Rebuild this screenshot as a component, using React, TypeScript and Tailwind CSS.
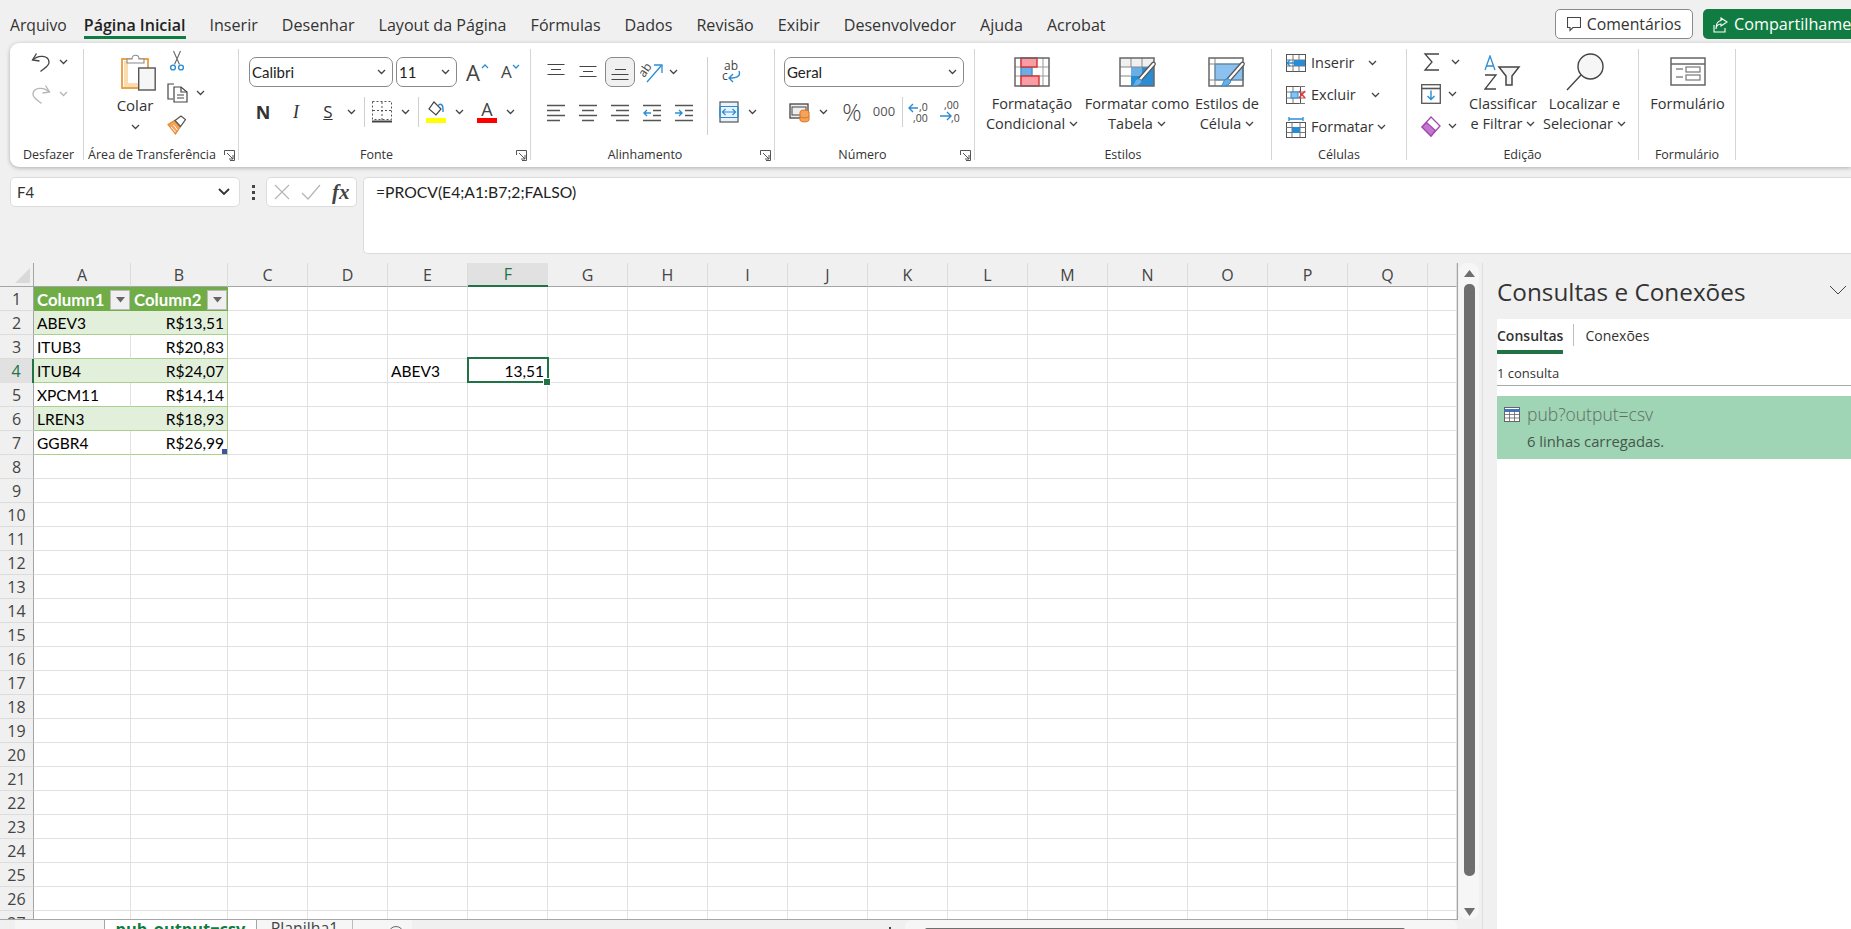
import React from "react";

const UI = "font-['Open_Sans','Noto_Sans',sans-serif]";
const CAL = "font-['Lato','Liberation_Sans',sans-serif]";

const Chev = ({ gray = false }: { gray?: boolean }) => (
  <svg width="9" height="6" viewBox="0 0 9 6" className="shrink-0">
    <path d="M1 1l3.5 3.5L8 1" fill="none" stroke={gray ? "#b5b5b5" : "#444"} strokeWidth="1.3" />
  </svg>
);

const Launcher = () => (
  <svg width="11" height="11" viewBox="0 0 11 11">
    <path d="M.5 5V.5H10.5V10.500H6M3 3l6 6M9 5v4H5" fill="none" stroke="#555" strokeWidth="1" />
  </svg>
);

function Group({ w, label, launcher, labelClass = "", children }: { w: string; label: string; launcher?: boolean; labelClass?: string; children: React.ReactNode }) {
  return (
    <div className={`${w} shrink-0 h-[111px] border-r border-[#d5d5d5] relative flex flex-col`}>
      <div className="h-[99px] shrink-0">{children}</div>
      <div className={`h-[12px] leading-[14px] text-[12.5px] text-[#333] text-center whitespace-nowrap ${labelClass}`}>{label}</div>
      {launcher && (
        <div className="absolute right-[3px] bottom-[-1px] h-[11px]">
          <Launcher />
        </div>
      )}
    </div>
  );
}

const Undo = ({ c = "#444" }: { c?: string }) => (
  <svg width="20" height="20" viewBox="0 0 20 20" fill="none" stroke={c} strokeWidth="1.3">
    <path d="M5.500 1.500 1.500 8l7 1" />
    <path d="M1.800 8C7 2.500 18 3 18 10.500 18 14 13 16.500 9.500 19.500" />
  </svg>
);
const Redo = () => (
  <svg width="20" height="20" viewBox="0 0 20 20" fill="none" stroke="#b5b5b5" strokeWidth="1.3">
    <path d="M14.500 1.500l4 6.500-7 1" />
    <path d="M18.200 8C13 2.500 2 3 2 10.500 2 14 7 16.500 10.500 19.500" />
  </svg>
);
const Paste = () => (
  <svg width="35" height="38" viewBox="0 0 35 38" fill="none">
    <rect x="1" y="6" width="26" height="29" fill="#fff" stroke="#ea9a3a" strokeWidth="1.8" />
    <path d="M3 8h4v25H3zM3 30h22v4H3z" fill="#fbdcae" />
    <path d="M6 6h5c0-5 7-5 7 0h5v4H6z" fill="#fff" stroke="#8a8a8a" strokeWidth="1.1" />
    <rect x="17.700" y="15" width="16.500" height="22" fill="#f6f6f6" stroke="#555" strokeWidth="1.4" />
  </svg>
);
const Scissors = () => (
  <svg width="20" height="22" viewBox="0 0 20 22" fill="none">
    <path d="M6.500 1l6 13.500M13.500 1l-6 13.500" stroke="#666" strokeWidth="1.1" />
    <circle cx="6" cy="17.500" r="2.400" stroke="#2a8dd4" strokeWidth="1.4" />
    <circle cx="14" cy="17.500" r="2.400" stroke="#2a8dd4" strokeWidth="1.4" />
  </svg>
);
const Copy = () => (
  <svg width="21" height="20" viewBox="0 0 21 20" fill="none" stroke="#444" strokeWidth="1.2">
    <path d="M7 1H1v15h5" />
    <path d="M7 4h7l6 5v10H7z" fill="#fff" />
    <path d="M14 4v5h6M10 12h7M10 15h7" />
  </svg>
);
const Brush = () => (
  <svg width="20" height="20" viewBox="0 0 20 20" fill="none">
    <path d="M1 9.500l6.500-4 5.500 6.500-4.500 7z" fill="#f5a35a" stroke="#e08a2f" strokeWidth="1.2" />
    <path d="M4 12l4.500 5M6.500 10l4 5" stroke="#fff" strokeWidth="1" />
    <path d="M8 5.500 14 1l4.500 3.500-5 7z" fill="#fff" stroke="#555" strokeWidth="1.2" />
  </svg>
);
const AlignTop = () => (
  <svg width="20" height="20" viewBox="0 0 20 20" stroke="#444" strokeWidth="1.2"><path d="M1.500 2.500h17M5 7.500h10M1.500 12.500h17" /></svg>
);
const AlignMid = () => (
  <svg width="20" height="20" viewBox="0 0 20 20" stroke="#444" strokeWidth="1.2"><path d="M1.500 4.500h17M5 9.500h10M1.500 14.500h17" /></svg>
);
const AlignBot = () => (
  <svg width="20" height="20" viewBox="0 0 20 20" stroke="#444" strokeWidth="1.2"><path d="M5 7.500h11M1.500 12.500h17M1.500 17.500h17" /></svg>
);
const Orient = () => (
  <svg width="24" height="24" viewBox="0 0 24 24" fill="none">
    <text x="0" y="14" fontSize="12" fill="#444" transform="rotate(-55 6 12)" fontFamily="Open Sans">ab</text>
    <path d="M7 22 21 6M14 5h8v8" stroke="#2a8dd4" strokeWidth="1.3" />
  </svg>
);
const HAlign = ({ kind }: { kind: "l" | "c" | "r" }) => {
  const d =
    kind === "l"
      ? "M1 3.500h18M1 8.500h13M1 13.500h18M1 18.500h13"
      : kind === "c"
      ? "M1 3.500h18M4 8.500h12M1 13.500h18M4 18.500h12"
      : "M1 3.500h18M6 8.500h13M1 13.500h18M6 18.500h13";
  return (
    <svg width="20" height="21" viewBox="0 0 20 21" stroke="#555" strokeWidth="1.3"><path d={d} /></svg>
  );
};
const Indent = ({ out }: { out?: boolean }) => (
  <svg width="20" height="21" viewBox="0 0 20 21" fill="none" stroke="#555" strokeWidth="1.3">
    <path d="M1 3.500h18M11 8.500h8M11 13.500h8M1 18.500h18" />
    {out ? <path d="M9 11H2M5 8l-3 3 3 3" stroke="#2a8dd4" strokeWidth="1.4" /> : <path d="M1 11h7M5 8l3 3-3 3" stroke="#2a8dd4" strokeWidth="1.4" />}
  </svg>
);
const Wrap = () => (
  <svg width="20" height="24" viewBox="0 0 20 24" fill="none">
    <text x="3" y="10" fontSize="12" fill="#444" fontFamily="Open Sans">ab</text>
    <text x="1" y="20" fontSize="12" fill="#444" fontFamily="Open Sans">c</text>
    <path d="M18 11c2 5-2 7-9 7M12 14l-4 4 4 4" stroke="#2a8dd4" strokeWidth="1.4" />
  </svg>
);
const Merge = () => (
  <svg width="20" height="22" viewBox="0 0 20 22" fill="none">
    <rect x="1" y="1" width="18" height="20" fill="#e8f3fb" stroke="#555" strokeWidth="1.2" />
    <path d="M1 5.500h18M1 16.500h18" stroke="#2a8dd4" strokeWidth="1.2" />
    <path d="M1 5.500v11M19 5.500v11" stroke="#2a8dd4" strokeWidth="1.4" />
    <path d="M3.500 11h13M6.500 8l-3 3 3 3M13.500 8l3 3-3 3" stroke="#2a8dd4" strokeWidth="1.2" />
  </svg>
);
const Accounting = () => (
  <svg width="22" height="22" viewBox="0 0 22 22" fill="none">
    <rect x="1" y="3" width="18" height="14" fill="#eee" stroke="#444" strokeWidth="1.3" />
    <rect x="3" y="6" width="14" height="8" stroke="#444" strokeWidth="1" />
    <ellipse cx="15.500" cy="11" rx="4.500" ry="2" fill="#f5a35a" stroke="#d9741c" />
    <path d="M11 11v8c0 2.500 9 2.500 9 0v-8" fill="#f5a35a" stroke="#d9741c" />
    <path d="M11 15c0 2.500 9 2.500 9 0" stroke="#d9741c" />
  </svg>
);
const DecInc = () => (
  <svg width="22" height="24" viewBox="0 0 22 24" fill="none">
    <path d="M10 8H1M5 4 1 8l4 4" stroke="#2a8dd4" strokeWidth="1.4" />
    <text x="11" y="11" fontSize="10.500" fill="#444" fontFamily="Open Sans">,0</text>
    <text x="5" y="22" fontSize="10.500" fill="#444" fontFamily="Open Sans">,00</text>
  </svg>
);
const DecDec = () => (
  <svg width="22" height="24" viewBox="0 0 22 24" fill="none">
    <text x="5" y="9" fontSize="10.500" fill="#444" fontFamily="Open Sans">,00</text>
    <path d="M1 16h11M8 12l4 4-4 4" stroke="#2a8dd4" strokeWidth="1.4" />
    <text x="12" y="22" fontSize="10.500" fill="#444" fontFamily="Open Sans">,0</text>
  </svg>
);
const CondFmt = () => (
  <svg width="36" height="30" viewBox="0 0 36 30" fill="none">
    <rect x="1" y="1" width="34" height="28" fill="#fff" />
    <path d="M1 10h34M1 19h34M7 1v28M18 1v28M29 1v28" stroke="#999" strokeWidth="1" />
    <rect x="7" y="10" width="11" height="9" fill="#6aaee6" stroke="#2a8dd4" />
    <rect x="7" y="1" width="16" height="9" fill="#f99ca3" stroke="#d93030" strokeWidth="1.4" />
    <rect x="7" y="19" width="18" height="10" fill="#f99ca3" stroke="#d93030" strokeWidth="1.4" />
    <rect x="1" y="1" width="34" height="28" stroke="#666" strokeWidth="1.5" />
  </svg>
);
const BrushOver = () => (
  <>
    <path d="M33 6c2-2 4 0 3 2L22 24l-3-2z" fill="#fff" stroke="#555" strokeWidth="1.2" />
    <path d="M18 22c3-1 6 2 4 4-2 3-6 3-9 3 3-2 2-6 5-7z" fill="#6aaee6" stroke="#2a8dd4" />
  </>
);
const FmtTable = () => (
  <svg width="38" height="34" viewBox="0 0 38 34" fill="none" className="ml-[2px]">
    <rect x="1" y="1" width="34" height="28" fill="#fff" />
    <path d="M1 1h34v9H1z" fill="#f0f0f0" />
    <rect x="12" y="10" width="23" height="19" fill="#2a8dd4" />
    <rect x="12" y="10" width="11" height="9" fill="#6aaee6" />
    <path d="M1 10h34M1 19h11M12 1v9M23 1v9" stroke="#888" strokeWidth="1" />
    <rect x="1" y="1" width="34" height="28" stroke="#666" strokeWidth="1.5" />
    <BrushOver />
  </svg>
);
const CellStyle = () => (
  <svg width="38" height="34" viewBox="0 0 38 34" fill="none">
    <rect x="1" y="1" width="34" height="28" fill="#fff" />
    <rect x="7" y="7" width="28" height="16" fill="#8cc1ef" stroke="#2a8dd4" />
    <path d="M1 7h34M1 23h34M7 1v28" stroke="#888" strokeWidth="1" />
    <rect x="1" y="1" width="34" height="28" stroke="#666" strokeWidth="1.5" />
    <BrushOver />
  </svg>
);
const InsertI = () => (
  <svg width="20" height="18" viewBox="0 0 20 18" fill="none">
    <rect x=".5" y=".5" width="19" height="17" fill="#fff" stroke="#555" />
    <path d="M.5 6h19M.5 12h19M7 .5v17M13 .5v17" stroke="#777" />
    <rect x="8" y="6" width="11" height="6" fill="#2a8dd4" />
    <path d="M8 9H1M4 6 1 9l3 3" stroke="#2a8dd4" strokeWidth="1.4" fill="#fff" />
  </svg>
);
const DeleteI = () => (
  <svg width="20" height="20" viewBox="0 0 20 20" fill="none">
    <rect x=".5" y="1.500" width="14" height="17" fill="#fff" stroke="#555" />
    <path d="M.5 7h19M.5 13h19M7 1.500v17M13 1.500h6M13 18.500h6" stroke="#777" />
    <rect x="5" y="7" width="7" height="6" fill="#8cc1ef" stroke="#2a8dd4" />
    <path d="M13 6l6 7M19 6l-6 7" stroke="#e83a3a" strokeWidth="1.5" />
  </svg>
);
const FormatI = () => (
  <svg width="20" height="22" viewBox="0 0 20 22" fill="none">
    <path d="M3 1v4M17 1v4M3 3h14" stroke="#2a8dd4" strokeWidth="1.3" />
    <rect x=".5" y="6.500" width="19" height="15" fill="#fff" stroke="#555" />
    <path d="M.5 11.500h19M.5 16.500h19M6 6.500v15M14 6.500v15" stroke="#777" />
    <rect x="6" y="11" width="8" height="6" fill="#2a8dd4" />
  </svg>
);
const Sigma = () => (
  <svg width="18" height="20" viewBox="0 0 18 20" fill="none" stroke="#444" strokeWidth="1.3">
    <path d="M16 2H2l7 8-7 8h14" />
  </svg>
);
const FillI = () => (
  <svg width="20" height="20" viewBox="0 0 20 20" fill="none">
    <rect x=".7" y=".7" width="18.600" height="18.600" fill="#fff" stroke="#555" strokeWidth="1.3" />
    <path d="M.7 4.500h18.600" stroke="#555" strokeWidth="1.6" />
    <path d="M10 6.500v9M6.500 12l3.500 3.500 3.500-3.500" stroke="#2a8dd4" strokeWidth="1.4" />
  </svg>
);
const Eraser = () => (
  <svg width="20" height="21" viewBox="0 0 20 21" fill="none">
    <path d="M10 1l9 9-9 10L1 11z" fill="#fff" stroke="#a347b0" strokeWidth="1.3" />
    <path d="M5.500 6.500l9 8L10 20 1 11z" fill="#c376cd" stroke="#a347b0" strokeWidth="1.2" />
  </svg>
);
const SortI = () => (
  <svg width="38" height="36" viewBox="0 0 38 36" fill="none">
    <path d="M1 15 6 1l5 14M3 11h6" stroke="#2a8dd4" strokeWidth="1.3" />
    <path d="M1 20h11L1 34h11" stroke="#444" strokeWidth="1.3" />
    <path d="M15 12h20l-7 9v9h-6v-9z" stroke="#444" strokeWidth="1.5" fill="#f5f5f5" />
  </svg>
);
const Lens = () => (
  <svg width="38" height="38" viewBox="0 0 38 38" fill="none" stroke="#444" strokeWidth="1.4">
    <circle cx="24.500" cy="13.500" r="12.500" fill="#f6f6f6" />
    <path d="M15 22 1 37" />
  </svg>
);
const FormI = () => (
  <svg width="36" height="30" viewBox="0 0 36 30" fill="none">
    <rect x="1" y="1" width="34" height="27" stroke="#666" strokeWidth="1.5" fill="#fff" />
    <path d="M1 7h34" stroke="#666" strokeWidth="1.5" />
    <path d="M6 12h7M6 20h7" stroke="#888" strokeWidth="1.5" />
    <rect x="16" y="10" width="14" height="5" stroke="#777" strokeWidth="1.2" />
    <rect x="16" y="18" width="14" height="5" stroke="#777" strokeWidth="1.2" />
  </svg>
);

const Combo = ({ w, text }: { w: string; text: string }) => (
  <div className={`${w} h-[30px] border border-[#8a8a8a] rounded-[7px] bg-white flex items-center justify-between pl-[2px] pr-[6px] text-[15px] text-[#222] ${CAL}`}>
    <span>{text}</span>
    <Chev />
  </div>
);

const Big = ({ w, icon, l1, l2 }: { w: string; icon: React.ReactNode; l1: string; l2?: string }) => (
  <div className={`${w} flex flex-col items-center shrink-0`}>
    <div className="h-[37px] flex items-start justify-center">{icon}</div>
    <div className="text-[14.5px] leading-[20px] text-[#333] whitespace-nowrap">{l1}</div>
    {l2 && (
      <div className="text-[14.5px] leading-[20px] text-[#333] whitespace-nowrap flex items-center gap-[4px]">
        {l2}
        <Chev />
      </div>
    )}
  </div>
);

const Tabs = ["Inserir", "Desenhar", "Layout da Página", "Fórmulas", "Dados", "Revisão", "Exibir", "Desenvolvedor", "Ajuda", "Acrobat"];

function TopBar() {
  return (
    <div className="h-[43px] shrink-0 flex items-start justify-between pl-[10px]">
      <div className="flex gap-[24px] pt-[14px]">
        <div className="-mr-[7px] text-[15.7px] leading-[22px] text-[#333] whitespace-nowrap">Arquivo</div>
        <div className="relative text-[16px] leading-[22px] font-semibold text-[#222] whitespace-nowrap">
          Página Inicial
          <div className="absolute left-0 right-0 top-[22px] h-[3px] bg-[#107c41]" />
        </div>
        {Tabs.map((t) => (
          <div key={t} className="text-[16.1px] leading-[22px] text-[#333] whitespace-nowrap">{t}</div>
        ))}
      </div>
      <div className="flex gap-[10px] pt-[9px] w-[296px] overflow-hidden">
        <div className="w-[138px] h-[30px] shrink-0 border border-[#8a8a8a] rounded-[5px] bg-white flex items-center justify-center gap-[6px] pt-[1px] text-[15.8px] text-[#333]">
          <svg width="14" height="15" viewBox="0 0 14 15" fill="none" stroke="#444" strokeWidth="1.1"><path d="M.5.500h13v10H6l-3 3v-3H.5z" /></svg>
          Comentários
        </div>
        <div className="w-[170px] h-[30px] shrink-0 rounded-l-[5px] bg-[#107c41] flex items-center pl-[10px] gap-[6px] pt-[1px] text-[16.2px] text-white whitespace-nowrap">
          <svg width="15" height="16" viewBox="0 0 15 16" fill="none" stroke="#fff" strokeWidth="1.1" className="shrink-0"><path d="M1 8v7h11v-4M8 1l6 4-6 4V7C5 7 3 9 3 12 3 7 5 4 8 3.500z" /></svg>
          Compartilhamento
        </div>
      </div>
    </div>
  );
}

const Row3 = ({ children }: { children: React.ReactNode }) => <div className="flex items-center h-[20px]">{children}</div>;

function Ribbon() {
  return (
    <div className="h-[124px] shrink-0 ml-[10px] bg-white rounded-l-[9px] shadow-[0_1px_4px_rgba(0,0,0,0.28)] flex pt-[6px]">
      <Group w="w-[74px]" label="Desfazer" labelClass="pl-[4px]">
        <div className="flex flex-col gap-[12px] pt-[3px] pl-[21px]">
          <Row3><Undo /><span className="w-[8px]" /><Chev /></Row3>
          <Row3><Redo /><span className="w-[8px]" /><Chev gray /></Row3>
        </div>
      </Group>
      <Group w="w-[155px]" label="Área de Transferência" launcher labelClass="pr-[18px]">
        <div className="flex">
          <div className="ml-[30px] w-[42px] flex flex-col items-center pt-[4px]">
            <div className="ml-[7px] h-[40px]"><Paste /></div>
            <div className="text-[15px] leading-[20px] text-[#333] mt-[2px]">Colar</div>
            <div className="h-[14px] mt-[5px] flex items-center"><Chev /></div>
          </div>
          <div className="ml-[11px] flex flex-col gap-[12px] pt-[2px]">
            <Row3><Scissors /></Row3>
            <Row3><Copy /><span className="w-[8px]" /><Chev /></Row3>
            <Row3><Brush /></Row3>
          </div>
        </div>
      </Group>
      <Group w="w-[292px]" label="Fonte" launcher labelClass="pr-[16px]">
        <div className="pl-[10px] pt-[8px]">
          <div className="flex items-center">
            <Combo w="w-[144px]" text="Calibri" />
            <div className="w-[3px]" />
            <Combo w="w-[61px]" text="11" />
            <div className="ml-[9px] text-[22px] leading-[30px] text-[#444] relative w-[30px]">
              A
              <svg className="absolute left-[15px] top-[7px]" width="8" height="5" viewBox="0 0 8 5"><path d="M1 4l3-3 3 3" fill="none" stroke="#2a8dd4" strokeWidth="1.3" /></svg>
            </div>
            <div className="ml-[5px] text-[17px] leading-[30px] text-[#444] relative w-[20px]">
              A
              <svg className="absolute left-[11px] top-[7px]" width="8" height="5" viewBox="0 0 8 5"><path d="M1 1l3 3 3-3" fill="none" stroke="#2a8dd4" strokeWidth="1.3" /></svg>
            </div>
          </div>
          <div className="flex items-center h-[30px] mt-[10px]">
            <div className={`ml-[4px] w-[20px] text-center text-[18px] font-bold text-[#333] ${UI}`}>N</div>
            <div className="ml-[13px] w-[20px] text-center text-[18px] italic text-[#333] font-['Liberation_Serif',serif]">I</div>
            <div className="ml-[12px] w-[20px] text-center text-[17px] underline text-[#333]">S</div>
            <div className="ml-[9px]"><Chev /></div>
            <div className="ml-[8px] h-[30px] border-l border-[#cfcfcf]" />
            <div className="ml-[7px]">
              <svg width="20" height="22" viewBox="0 0 20 22" fill="none" stroke="#555"><rect x=".5" y=".5" width="19" height="18" strokeDasharray="2 2" /><path d="M10 1v18M1 9.500h18" strokeDasharray="2 2" /><path d="M0 20.500h20" strokeWidth="2" stroke="#444" /></svg>
            </div>
            <div className="ml-[9px]"><Chev /></div>
            <div className="ml-[8px] h-[30px] border-l border-[#cfcfcf]" />
            <div className="ml-[7px] w-[20px] flex flex-col items-center">
              <svg width="18" height="16" viewBox="0 0 18 16" fill="none"><path d="M7 1l7 7-5 6-7-6z" fill="#fff" stroke="#444" strokeWidth="1.2" /><path d="M11 5c2-3 5-2 5 3v3" stroke="#2a8dd4" strokeWidth="1.4" /></svg>
              <div className="w-[20px] h-[5px] mt-[1px] bg-[#ffff00]" />
            </div>
            <div className="ml-[9px]"><Chev /></div>
            <div className="ml-[13px] w-[20px] flex flex-col items-center">
              <div className="text-[18px] leading-[16px] text-[#444] h-[16px]">A</div>
              <div className="w-[20px] h-[5px] mt-[1px] bg-[#ff0000]" />
            </div>
            <div className="ml-[9px]"><Chev /></div>
          </div>
        </div>
      </Group>
      <Group w="w-[244px]" label="Alinhamento" launcher labelClass="pr-[15px]">
        <div className="flex pt-[8px] pl-[9px]">
          <div className="w-[167px]">
            <div className="flex items-center h-[30px]">
              <div className="w-[32px] flex justify-center"><AlignTop /></div>
              <div className="w-[32px] flex justify-center"><AlignMid /></div>
              <div className="w-[30px] h-[30px] ml-[1px] flex items-center justify-center border border-[#8a8a8a] rounded-[7px] bg-[#f0f0f0]"><AlignBot /></div>
              <div className="w-[33px] flex justify-center"><Orient /></div>
              <div className="ml-[1px]"><Chev /></div>
            </div>
            <div className="flex items-center h-[30px] mt-[10px]">
              <div className="w-[32px] flex justify-center"><HAlign kind="l" /></div>
              <div className="w-[32px] flex justify-center"><HAlign kind="c" /></div>
              <div className="w-[32px] flex justify-center"><HAlign kind="r" /></div>
              <div className="w-[32px] flex justify-center"><Indent out /></div>
              <div className="w-[32px] flex justify-center"><Indent /></div>
            </div>
          </div>
          <div className="h-[78px] border-l border-[#cfcfcf]" />
          <div>
            <div className="h-[30px] flex items-center pl-[13px]"><Wrap /></div>
            <div className="h-[30px] mt-[10px] flex items-center pl-[11px]"><Merge /><span className="w-[9px]" /><Chev /></div>
          </div>
        </div>
      </Group>
      <Group w="w-[200px]" label="Número" launcher labelClass="pr-[24px]">
        <div className="pl-[9px] pt-[8px]">
          <Combo w="w-[180px]" text="Geral" />
          <div className="flex items-center h-[30px] mt-[10px]">
            <div className="ml-[5px]"><Accounting /></div>
            <div className="ml-[8px]"><Chev /></div>
            <div className="ml-[9px] w-[30px] text-[24px] leading-[30px] text-[#444] text-center font-light">%</div>
            <div className="ml-[2px] w-[30px] text-[13px] text-center text-[#555]">000</div>
            <div className="ml-[3px] h-[30px] border-l border-[#cfcfcf]" />
            <div className="ml-[5px]"><DecInc /></div>
            <div className="ml-[9px]"><DecDec /></div>
          </div>
        </div>
      </Group>
      <Group w="w-[297px]" label="Estilos">
        <div className="flex pt-[8px] pl-[4px]">
          <Big w="w-[106px]" icon={<CondFmt />} l1="Formatação" l2="Condicional" />
          <Big w="w-[104px]" icon={<FmtTable />} l1="Formatar como" l2="Tabela" />
          <Big w="w-[76px]" icon={<CellStyle />} l1="Estilos de" l2="Célula" />
        </div>
      </Group>
      <Group w="w-[135px]" label="Células">
        <div className="flex flex-col gap-[12px] pt-[4px] pl-[14px] text-[14.5px] text-[#333]">
          <Row3><InsertI /><span className="ml-[5px] w-[57px]">Inserir</span><Chev /></Row3>
          <Row3><DeleteI /><span className="ml-[5px] w-[60px]">Excluir</span><Chev /></Row3>
          <Row3><FormatI /><span className="ml-[5px] w-[66px]">Formatar</span><Chev /></Row3>
        </div>
      </Group>
      <Group w="w-[232px]" label="Edição">
        <div className="flex pl-[14px]">
          <div className="w-[43px] flex flex-col gap-[12px] pt-[3px]">
            <Row3><span className="ml-[2px]"><Sigma /></span><span className="ml-[10px]"><Chev /></span></Row3>
            <Row3><FillI /><span className="ml-[7px]"><Chev /></span></Row3>
            <Row3><Eraser /><span className="ml-[7px]"><Chev /></span></Row3>
          </div>
          <div className="pt-[8px] flex">
            <Big w="w-[78px]" icon={<div className="-mt-[2px]"><SortI /></div>} l1="Classificar" l2="e Filtrar" />
            <Big w="w-[85px]" icon={<div className="-mt-[4px]"><Lens /></div>} l1="Localizar e" l2="Selecionar" />
          </div>
        </div>
      </Group>
      <Group w="w-[97px]" label="Formulário">
        <div className="pt-[8px]">
          <Big w="w-[97px]" icon={<FormI />} l1="Formulário" />
        </div>
      </Group>
    </div>
  );
}

function FormulaRow() {
  return (
    <div className="h-[77px] shrink-0 mt-[10px] flex items-start">
      <div className="ml-[10px] w-[230px] h-[30px] bg-white border border-[#dcdcdc] rounded-[5px] flex items-center justify-between pl-[6px] pr-[9px] text-[15px] text-[#333]">
        <span className={CAL}>F4</span>
        <svg width="12" height="8" viewBox="0 0 12 8"><path d="M1 1l5 5 5-5" fill="none" stroke="#333" strokeWidth="1.8" /></svg>
      </div>
      <div className="w-[26px] h-[30px] flex flex-col items-center justify-center gap-[3px]">
        <span className="w-[3px] h-[3px] bg-[#444]" />
        <span className="w-[3px] h-[3px] bg-[#444]" />
        <span className="w-[3px] h-[3px] bg-[#444]" />
      </div>
      <div className="w-[91px] h-[30px] bg-white border border-[#dcdcdc] rounded-[5px] flex items-center pl-[7px] gap-[11px]">
        <svg width="16" height="16" viewBox="0 0 16 16"><path d="M1 1l14 14M15 1 1 15" stroke="#b5b5b5" strokeWidth="1.2" /></svg>
        <svg width="20" height="16" viewBox="0 0 20 16"><path d="M1 9l6 6L19 1" fill="none" stroke="#b5b5b5" strokeWidth="1.2" /></svg>
        <span className="text-[21px] italic font-bold leading-[20px] text-[#444] font-['Liberation_Serif',serif]">fx</span>
      </div>
      <div className={`ml-[6px] flex-1 h-[77px] bg-white border border-[#dcdcdc] border-r-0 rounded-l-[5px] pl-[12px] pt-[4px] text-[15.7px] leading-[21px] text-[#222] ${CAL}`}>
        =PROCV(E4;A1:B7;2;FALSO)
      </div>
    </div>
  );
}

const cols = ["A", "B", "C", "D", "E", "F", "G", "H", "I", "J", "K", "L", "M", "N", "O", "P", "Q", "R"];
const table: Record<number, [string, string]> = {
  2: ["ABEV3", "R$13,51"],
  3: ["ITUB3", "R$20,83"],
  4: ["ITUB4", "R$24,07"],
  5: ["XPCM11", "R$14,14"],
  6: ["LREN3", "R$18,93"],
  7: ["GGBR4", "R$26,99"],
};
const colW = (c: string) => (c === "A" || c === "B" ? "w-[97px]" : c === "R" ? "w-[29px]" : "w-[80px]");

const FilterBtn = () => (
  <span className="w-[20px] h-[20px] shrink-0 bg-[#f0f0f0] border border-[#bbb] flex items-center justify-center">
    <svg width="9" height="6" viewBox="0 0 9 6"><path d="M0 0h9L4.500 5.500z" fill="#666" /></svg>
  </span>
);

function Cell({ r, c }: { r: number; c: string }) {
  const w = colW(c);
  const base = `${w} h-[24px] shrink-0 relative flex items-center pt-[2px] text-[15.5px] text-black ${CAL}`;
  if (r === 1 && c === "A")
    return <div className={`${base} bg-[#70ad47] text-white text-[16.8px] font-bold pl-[3px] justify-between pr-[1px]`}>Column1<FilterBtn /></div>;
  if (r === 1 && c === "B")
    return <div className={`${base} bg-[#70ad47] text-white text-[16.8px] font-bold pl-[3px] justify-between pr-[1px]`}>Column2<FilterBtn /></div>;
  if (table[r] && (c === "A" || c === "B")) {
    const band = r % 2 === 0;
    const bg = band ? "bg-[#e2efda]" : "bg-white";
    const txt = c === "A" ? table[r][0] : table[r][1];
    return (
      <div className={`${base} ${bg} border-b border-[#a9d08e] ${c === "A" ? (band ? "pl-[3px]" : "pl-[3px] border-r border-r-[#e1e1e1]") : "justify-end pr-[3px] border-r border-[#a9d08e]"}`}>
        {txt}
        {r === 7 && c === "B" && <span className="absolute right-0 bottom-0 w-[5px] h-[5px] bg-[#3f51a8]" />}
      </div>
    );
  }
  if (r === 4 && c === "E") return <div className={`${base} border-b border-r border-[#e1e1e1] bg-white pl-[3px]`}>ABEV3</div>;
  if (r === 4 && c === "F")
    return (
      <div className={`${base} border-b border-r border-[#e1e1e1] bg-white justify-end pr-[3px]`}>
        13,51
        <span className="absolute z-10 left-[-1px] top-[-2px] right-[-2px] bottom-[-1px] border-2 border-[#217346]" />
        <span className="absolute z-10 right-[-4px] bottom-[-4px] w-[6px] h-[6px] bg-[#217346] border border-white box-content" />
      </div>
    );
  return <div className={`${base} border-b border-r border-[#e1e1e1] bg-white`} />;
}

function Sheet() {
  const rows = Array.from({ length: 27 }, (_, i) => i + 1);
  return (
    <div className={`flex-1 h-[656px] overflow-hidden border-r border-[#a5a5a5] ${UI}`}>
      <div className="flex h-[24px]">
        <div className="w-[34px] h-[24px] shrink-0 border-b border-r border-[#a5a5a5] flex items-end justify-end pr-[3px] pb-[3px]">
          <svg width="15" height="15" viewBox="0 0 15 15"><path d="M15 0v15H0z" fill="#d9d9d9" /></svg>
        </div>
        {cols.map((c) =>
          c === "F" ? (
            <div key={c} className={`${colW(c)} shrink-0 h-[24px] bg-[#e1e1e1] border-b-2 border-[#217346] text-[16px] text-[#217346] flex items-center justify-center`}>{c}</div>
          ) : (
            <div key={c} className={`${colW(c)} shrink-0 h-[24px] border-b border-r border-b-[#a5a5a5] border-r-[#dcdcdc] text-[16px] text-[#444] flex items-center justify-center`}>{c === "R" ? "" : c}</div>
          )
        )}
      </div>
      {rows.map((r) => (
        <div key={r} className="flex h-[24px]">
          {r === 4 ? (
            <div className="w-[34px] h-[24px] shrink-0 bg-[#e1e1e1] border-r-2 border-[#217346] text-[16px] text-[#217346] flex items-center justify-center">{r}</div>
          ) : (
            <div className="w-[34px] h-[24px] shrink-0 border-b border-r border-b-[#dcdcdc] border-r-[#a5a5a5] text-[16px] text-[#444] flex items-center justify-center">{r}</div>
          )}
          {cols.map((c) => (
            <Cell key={c} r={r} c={c} />
          ))}
        </div>
      ))}
    </div>
  );
}

function SheetTabs() {
  return (
    <div className={`h-[10px] border-t border-[#a5a5a5] flex overflow-hidden ${UI}`}>
      <div className="ml-[15px] w-[89px] h-[10px] bg-[#f6f6f6]" />
      <div className="w-[153px] h-[20px] shrink-0 bg-white border-x border-[#a5a5a5] text-center text-[16.4px] font-bold leading-[17px] text-[#107c41]">pub_output=csv</div>
      <div className="w-[96px] h-[20px] shrink-0 bg-[#f6f6f6] border-r border-[#bbb] text-center text-[15.8px] leading-[17px] text-[#444]">Planilha1</div>
      <div className="w-[59px] h-[10px] bg-[#f6f6f6] flex justify-center pt-[6px] pl-[26px]">
        <span className="w-[16px] h-[16px] shrink-0 rounded-full border border-[#666]" />
      </div>
      <div className="ml-[477px] w-[2px] h-[2px] mt-[7px] bg-[#444]" />
      <div className="ml-[14px] w-[552px] h-[10px] bg-[#f6f6f6] rounded-t-[6px] flex items-end pl-[20px] pr-[52px]">
        <div className="h-[2px] flex-1 bg-[#6e6e6e] rounded-t-[2px]" />
      </div>
    </div>
  );
}

function VScroll() {
  return (
    <div className="w-[25px] shrink-0 h-[666px] border-r border-[#dedede] pr-[3px] pl-[1px]">
      <div className="h-[656px] bg-[#f6f6f6] rounded-[8px] flex flex-col items-center pt-[7px]">
        <svg width="11" height="7" viewBox="0 0 11 7"><path d="M5.500 0 11 7H0z" fill="#6e6e6e" /></svg>
        <div className="w-[11px] h-[592px] mt-[7px] bg-[#6e6e6e] rounded-[5px]" />
        <svg className="mt-[32px]" width="11" height="8" viewBox="0 0 11 8"><path d="M5.500 8 11 0H0z" fill="#6e6e6e" /></svg>
      </div>
    </div>
  );
}

function Panel() {
  return (
    <div className={`flex-1 h-[666px] pl-[14px] ${UI}`}>
      <div className="h-[56px] flex items-center justify-between pr-[4px] pb-[6px] pt-[8px]">
        <span className="text-[24.3px] text-[#333] whitespace-nowrap leading-[32px]">Consultas e Conexões</span>
        <svg width="18" height="10" viewBox="0 0 18 10" className="mb-[4px]"><path d="M1 1l8 8 8-8" fill="none" stroke="#444" strokeWidth="1" /></svg>
      </div>
      <div className="bg-white h-[610px]">
        <div className="h-[35px] flex items-start text-[14px] text-[#333]">
          <div className="relative mt-[6px] h-[22px] leading-[22px] font-semibold">
            Consultas
            <div className="absolute left-0 right-0 top-[25px] h-[4px] bg-[#217346]" />
          </div>
          <div className="ml-[10px] mt-[5px] h-[22px] border-l border-[#bdbdbd]" />
          <div className="ml-[11px] mt-[6px] h-[22px] leading-[22px]">Conexões</div>
        </div>
        <div className="h-[32px] border-b border-[#aaa] text-[13px] leading-[16px] pt-[11px] text-[#333]">1 consulta</div>
        <div className="mt-[10px] h-[63px] bg-[#9fd4b4] pl-[7px] pt-[6px]">
          <div className="flex items-center h-[24px]">
            <svg width="16" height="15" viewBox="0 0 16 15" fill="#fff" stroke="#666"><rect x=".5" y=".5" width="15" height="14" /><path d="M.5 3.500h15" stroke="#4472c4" strokeWidth="3" /><path d="M.5 7.500h15M.5 11h15M5.500 3v12M10.500 3v12" strokeWidth=".8" /></svg>
            <span className="ml-[7px] text-[17.5px] font-light text-[#5d6e64]">pub?output=csv</span>
          </div>
          <div className="pl-[23px] mt-[4px] text-[14.8px] leading-[22px] text-[#46574d]">6 linhas carregadas.</div>
        </div>
      </div>
    </div>
  );
}

export default function App() {
  return (
    <div className={`w-[1851px] h-[929px] overflow-hidden bg-[#f0f0f0] flex flex-col ${UI}`}>
      <TopBar />
      <Ribbon />
      <FormulaRow />
      <div className="mt-[9px] flex h-[666px]">
        <div className="w-[1458px] shrink-0 flex flex-col">
          <Sheet />
          <SheetTabs />
        </div>
        <VScroll />
        <Panel />
      </div>
    </div>
  );
}
